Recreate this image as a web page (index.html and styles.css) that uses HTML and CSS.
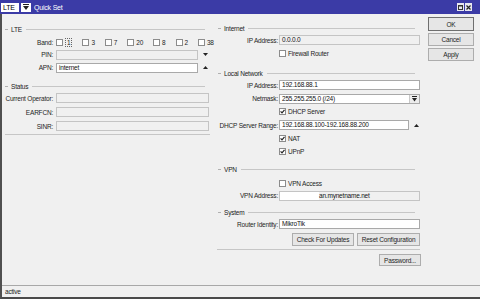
FILE: index.html
```html
<!DOCTYPE html>
<html lang="en">
<head>
  <meta charset="UTF-8">
  <title>Quick Set</title>
  <link rel="stylesheet" href="styles.css">
</head>
<body>
  <div class="window">
    <div class="titlebar">
      <div class="tab-select">
        <span class="tab-value">LTE</span>
        <span class="tab-arrow">
          <svg width="6" height="6" viewBox="0 0 6 6"><rect x="0" y="0" width="6" height="1" fill="#222"/><path d="M0 2 H6 L3 6 Z" fill="#222"/></svg>
        </span>
      </div>
      <span class="title">Quick Set</span>
      <div class="win-icons">
        <span class="win-btn">
          <svg width="5" height="5" viewBox="0 0 5 5"><rect x="0.5" y="0.5" width="4" height="4" fill="none" stroke="#333"/><rect x="0" y="0" width="5" height="1.5" fill="#333"/></svg>
        </span>
        <span class="win-btn">
          <svg width="5" height="5" viewBox="0 0 5 5"><path d="M0.5 0.5 L4.5 4.5 M4.5 0.5 L0.5 4.5" stroke="#222" stroke-width="1.2"/></svg>
        </span>
      </div>
    </div>

    <div class="frame">
      <div class="main">
        <!-- left column: LTE + status -->
        <div class="col col-left">
          <div class="group-head">LTE</div>
          <div class="row row-band">
            <span class="label">Band:</span>
            <div class="bands">
              <span class="band"><span class="cb"></span><span class="focus">1</span></span>
              <span class="band"><span class="cb"></span>3</span>
              <span class="band"><span class="cb"></span>7</span>
              <span class="band"><span class="cb"></span>20</span>
              <span class="band"><span class="cb"></span>8</span>
              <span class="band"><span class="cb"></span>2</span>
              <span class="band"><span class="cb"></span>38</span>
            </div>
          </div>
          <div class="row">
            <span class="label">PIN:</span>
            <div class="input ro"></div>
            <span class="spin"><svg width="5" height="3" viewBox="0 0 5 3"><path d="M0 0 H5 L2.5 3 Z" fill="#222"/></svg></span>
          </div>
          <div class="row">
            <span class="label">APN:</span>
            <div class="input">internet</div>
            <span class="spin"><svg width="5" height="3" viewBox="0 0 5 3"><path d="M0 3 H5 L2.5 0 Z" fill="#222"/></svg></span>
          </div>

          <div class="group-head group-status">Status</div>
          <div class="row row-status">
            <span class="label">Current Operator:</span>
            <div class="input ro"></div>
          </div>
          <div class="row row-status">
            <span class="label">EARFCN:</span>
            <div class="input ro"></div>
          </div>
          <div class="row row-status">
            <span class="label">SINR:</span>
            <div class="input ro"></div>
          </div>
          <div class="sep sep-left"></div>
        </div>

        <!-- right column: internet, local network, vpn, system -->
        <div class="col col-right">
          <div class="group-head">Internet</div>
          <div class="row row-first">
            <span class="label">IP Address:</span>
            <div class="input ro">0.0.0.0</div>
          </div>
          <div class="row check-row">
            <span class="cb"></span>Firewall Router
          </div>

          <div class="group-head group-lan">Local Network</div>
          <div class="row row-first">
            <span class="label">IP Address:</span>
            <div class="input">192.168.88.1</div>
          </div>
          <div class="row">
            <span class="label">Netmask:</span>
            <div class="input select">
              <span class="select-value">255.255.255.0 (/24)</span>
              <span class="select-btn">
                <svg width="5" height="6" viewBox="0 0 5 6"><rect x="0" y="0" width="5" height="1" fill="#222"/><path d="M0 2 H5 L2.5 5.5 Z" fill="#222"/></svg>
              </span>
            </div>
          </div>
          <div class="row check-row">
            <span class="cb on"><svg width="5" height="5" viewBox="0 0 5 5"><path d="M0.6 2.4 L2 3.9 L4.5 0.9" fill="none" stroke="#222" stroke-width="1.2"/></svg></span>DHCP Server
          </div>
          <div class="row row-range">
            <span class="label">DHCP Server Range:</span>
            <div class="input">192.168.88.100-192.168.88.200</div>
            <span class="spin"><svg width="5" height="3" viewBox="0 0 5 3"><path d="M0 3 H5 L2.5 0 Z" fill="#222"/></svg></span>
          </div>
          <div class="row check-row">
            <span class="cb on"><svg width="5" height="5" viewBox="0 0 5 5"><path d="M0.6 2.4 L2 3.9 L4.5 0.9" fill="none" stroke="#222" stroke-width="1.2"/></svg></span>NAT
          </div>
          <div class="row check-row">
            <span class="cb on"><svg width="5" height="5" viewBox="0 0 5 5"><path d="M0.6 2.4 L2 3.9 L4.5 0.9" fill="none" stroke="#222" stroke-width="1.2"/></svg></span>UPnP
          </div>

          <div class="group-head group-vpn">VPN</div>
          <div class="row check-row row-vpn">
            <span class="cb"></span>VPN Access
          </div>
          <div class="row">
            <span class="label">VPN Address:</span>
            <div class="input ro vpn-addr"><span class="redact"></span>an.mynetname.net</div>
          </div>

          <div class="group-head group-sys">System</div>
          <div class="row row-first">
            <span class="label">Router Identity:</span>
            <div class="input">MikroTik</div>
          </div>
          <div class="btn-row">
            <button class="btn btn-updates">Check For Updates</button>
            <button class="btn btn-reset">Reset Configuration</button>
          </div>
          <div class="sep sep-right"></div>
          <div class="btn-row btn-row-pass">
            <button class="btn btn-pass">Password...</button>
          </div>
        </div>

        <!-- dialog buttons -->
        <div class="actions">
          <button class="btn btn-ok">OK</button>
          <button class="btn btn-side">Cancel</button>
          <button class="btn btn-side">Apply</button>
        </div>
      </div>

      <div class="statusbar">active</div>
    </div>
  </div>
</body>
</html>
```

FILE: styles.css
```css
body {
  margin: 0;
  font-family: 'Liberation Sans', Arial, sans-serif;
  font-size: 6.5px;
  letter-spacing: -0.2px;
  color: #1e1e1e;
  background-color: #f0f0f0;
}

.window {
  width: 480px;
  height: 299px;
  display: flex;
  flex-direction: column;
  background-color: #f0f0f0;
}

/* title bar */
.titlebar {
  height: 14px;
  flex-shrink: 0;
  background-color: #3b3ba6;
  display: flex;
  align-items: center;
  padding-left: 1px;
}

.tab-select {
  display: flex;
  align-items: center;
  gap: 2px;
}

.tab-value {
  width: 18px;
  height: 9px;
  box-sizing: border-box;
  background-color: #fff;
  color: #000;
  font-size: 7px;
  line-height: 9px;
  padding-left: 2px;
}

.tab-arrow {
  width: 10px;
  height: 9px;
  background-color: #fff;
  display: flex;
  align-items: center;
  justify-content: center;
}

.title {
  color: #fff;
  font-size: 7px;
  margin-left: 3px;
}

.win-icons {
  margin-left: auto;
  display: flex;
  gap: 1px;
  padding-right: 8px;
}

.win-btn {
  width: 7px;
  height: 8px;
  background-color: #e8e8f0;
  display: flex;
  align-items: center;
  justify-content: center;
}

/* window frame */
.frame {
  flex: 1;
  display: flex;
  flex-direction: column;
  border-left: 2px solid #505050;
  border-bottom: 2px solid #4a4a4a;
}

.main {
  flex: 1;
  display: flex;
}

.col {
  display: flex;
  flex-direction: column;
}

.col-left {
  width: 210px;
  padding-top: 10px;
}

.col-right {
  width: 212px;
  padding-top: 9px;
}

.group-head {
  height: 10px;
  display: flex;
  align-items: center;
  color: #222;
}

.group-head::before {
  content: "";
  width: 3px;
  height: 1px;
  background-color: #b0b0b0;
  margin-right: 3px;
}

.group-head::after {
  content: "";
  flex: 1;
  height: 1px;
  background-color: #c6c6c6;
  margin-left: 4px;
}

.col-left .group-head {
  padding-left: 3px;
  padding-right: 7px;
}

.col-right .group-head {
  padding-left: 6px;
  padding-right: 9px;
}

.group-status { margin-top: 7px; }
.group-lan { margin-top: 8px; }
.group-vpn { margin-top: 6px; }
.group-sys { margin-top: 5px; }

.row {
  height: 13px;
  display: flex;
  align-items: center;
}

.label {
  flex-shrink: 0;
  text-align: right;
  white-space: nowrap;
}

.col-left .label {
  width: 51px;
  margin-right: 3px;
}

.col-right .label {
  width: 66px;
  margin-right: 1px;
}

.col-right .row {
  padding-right: 4px;
}

.col-right .row-first {
  height: 14px;
}

.input {
  flex: 1;
  height: 10px;
  box-sizing: border-box;
  border: 1px solid #a9a9a9;
  background-color: #fff;
  padding-left: 2px;
  line-height: 8px;
  white-space: nowrap;
  overflow: hidden;
  color: #111;
}

.input.ro {
  background-color: #f0f0f0;
  border-color: #c4c4c4;
}

.spin {
  width: 14px;
  flex-shrink: 0;
  display: flex;
  align-items: center;
  justify-content: center;
}

/* band checkboxes */
.row-band {
  height: 12px;
  margin-top: 2px;
}

.bands {
  display: flex;
  align-items: center;
  gap: 10px;
  white-space: nowrap;
}

.band {
  display: flex;
  align-items: center;
}

.band .cb {
  margin-right: 2px;
}

.focus {
  display: inline-block;
  height: 9px;
  box-sizing: border-box;
  border: 1px dotted #666;
  padding: 0 1px;
  line-height: 7px;
}

.cb {
  width: 7px;
  height: 7px;
  box-sizing: border-box;
  border: 1px solid #8c8c8c;
  background-color: #fff;
  display: inline-flex;
  align-items: center;
  justify-content: center;
  flex-shrink: 0;
}

.check-row {
  padding-left: 67px;
}

.check-row .cb {
  margin-right: 2px;
}

.row-vpn {
  height: 12px;
  margin-top: 3px;
}

.row-status {
  height: 14px;
  padding-right: 3px;
}

.row-range {
  height: 14px;
}

.col-right .row-range {
  padding-right: 0;
}

.row-range .spin {
  width: 15px;
}

.sep {
  height: 1px;
  background-color: #c6c6c6;
}

.sep-left {
  margin: 1px 2px 0 3px;
}

.sep-right {
  margin: 3px 4px 0 5px;
}

/* netmask dropdown */
.select {
  display: flex;
  align-items: center;
  padding-right: 0;
}

.select-value {
  flex: 1;
}

.select-btn {
  width: 9px;
  height: 8px;
  border-left: 1px solid #c8c8c8;
  background-color: #ececec;
  display: flex;
  align-items: center;
  justify-content: center;
}

.vpn-addr {
  display: flex;
  align-items: center;
  padding-left: 0;
}

.redact {
  width: 39px;
  height: 8px;
  background-color: #fff;
  flex-shrink: 0;
}

/* buttons */
.btn {
  font-family: inherit;
  font-size: 6.5px;
  letter-spacing: -0.2px;
  color: #1e1e1e;
  background-color: #e6e6e6;
  border: 1px solid #adadad;
  padding: 0;
  margin: 0;
  box-sizing: border-box;
}

.btn-row {
  display: flex;
  justify-content: flex-end;
  gap: 3px;
  padding-right: 4px;
  margin-top: 2px;
}

.btn-updates {
  width: 62px;
  height: 13px;
}

.btn-reset {
  width: 63px;
  height: 13px;
}

.btn-row-pass {
  margin-top: 4px;
  padding-right: 3px;
}

.btn-pass {
  width: 42px;
  height: 12px;
}

.actions {
  flex: 1;
  display: flex;
  flex-direction: column;
  gap: 2px;
  padding-top: 3px;
  padding-left: 4px;
}

.btn-ok {
  width: 46px;
  height: 14px;
  border-color: #6f6f6f;
}

.btn-side {
  width: 46px;
  height: 13px;
}

/* status bar */
.statusbar {
  height: 11px;
  border-top: 1px solid #a8a8a8;
  padding-left: 3px;
  line-height: 11px;
  color: #222;
}
```
